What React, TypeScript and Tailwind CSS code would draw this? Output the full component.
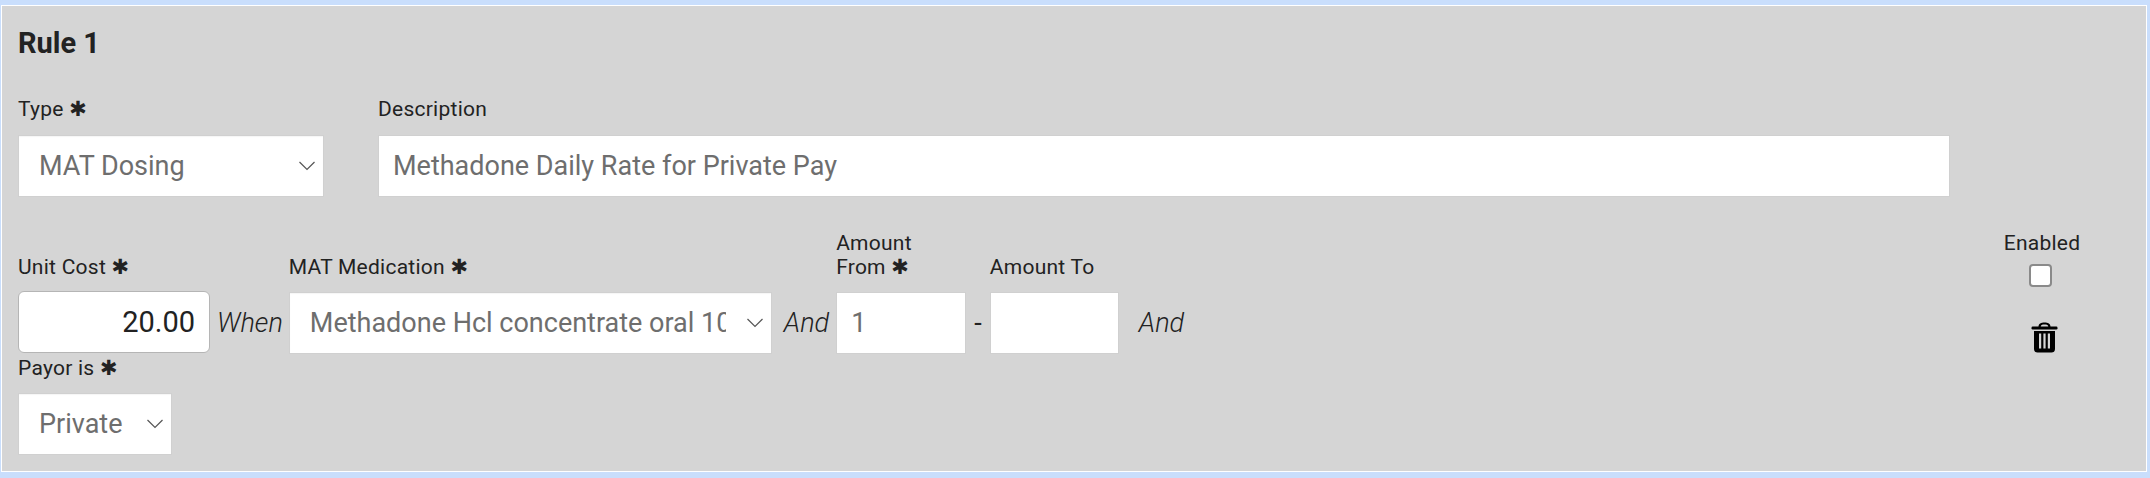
const font = "font-['Roboto',sans-serif]";

function Chevron() {
  return (
    <svg className="pointer-events-none absolute right-[7px] top-[24px] h-[12px] w-[18px]" viewBox="0 0 18 12" fill="none">
      <path d="M1.5 2 L9 9.5 L16.5 2" stroke="#555" strokeWidth="1.2" />
    </svg>
  );
}

function Trash() {
  return (
    <svg className="mt-[35px] mb-[1px] ml-[5px] h-[31px] w-[27px]" viewBox="0 0 27 31" fill="black">
      <path d="M7.5 5 C7.5 1.5 10 0.5 13.5 0.5 C17 0.5 19.5 1.5 19.5 5 L17.3 5 C17.3 3 16 2.5 13.5 2.5 C11 2.5 9.7 3 9.7 5 Z" />
      <rect x="0.5" y="4.5" width="26" height="3" rx="1.2" />
      <path fillRule="evenodd" d="M3 9 H24 V27 C24 29.5 22.5 30.5 20.5 30.5 H6.5 C4.5 30.5 3 29.5 3 27 Z M8 11.5 V26.5 H10.2 V11.5 Z M12.4 11.5 V26.5 H14.6 V11.5 Z M16.8 11.5 V26.5 H19 V11.5 Z" />
    </svg>
  );
}

function Star() {
  return <span className="text-[21px] font-['DejaVu_Sans',sans-serif]">✱</span>;
}

function Select({ value, className, pad }: { value: string; className: string; pad: string }) {
  return (
    <div className={`relative h-[62px] bg-white border border-[#d0d0d0] shadow-[inset_0_1px_1px_rgba(0,0,0,0.04)] ${className}`}>
      <select
        defaultValue={value}
        className={`h-full w-full appearance-none bg-transparent text-[27px] leading-[34px] tracking-normal text-[#6e6e6e] outline-none ${pad}`}
      >
        <option>{value}</option>
      </select>
      <Chevron />
    </div>
  );
}

function TextBox({ value, className }: { value: string; className: string }) {
  return (
    <input
      readOnly
      value={value}
      className={`h-[62px] bg-white border border-[#d0d0d0] px-[14px] text-[27px] tracking-normal text-[#6e6e6e] outline-none ${className}`}
    />
  );
}

function Word({ children, className }: { children: string; className: string }) {
  return <span className={`text-[27px] italic font-light leading-[62px] tracking-normal text-[#222] ${className}`}>{children}</span>;
}

export default function App() {
  return (
    <div className={`${font} h-[478px] bg-[#c9defc] pt-[5px] pb-[6px] pl-[1px] pr-[3px]`}>
      <div className="flex h-[467px] flex-col border border-white bg-[#d5d5d5] pl-[16px] text-[21px] leading-[24px] tracking-[0.25px] text-[#222]">
        <h2 className="mt-[20px] text-[29px] font-bold leading-[34px] tracking-normal">Rule 1</h2>

        <div className="mt-[37px] flex gap-[54px]">
          <div className="flex flex-col gap-[14px]">
            <label className="h-[24px]">Type <Star /></label>
            <Select value="MAT Dosing" className="w-[306px]" pad="pl-[20px] pr-[36px]" />
          </div>
          <div className="flex flex-col gap-[14px]">
            <label className="h-[24px]">Description</label>
            <TextBox value="Methadone Daily Rate for Private Pay" className="w-[1572px]" />
          </div>
        </div>

        <div className="mt-[34px] flex items-end">
          <div className="mb-[1px] flex flex-col gap-[12px]">
            <label>Unit Cost <Star /></label>
            <input
              readOnly
              value="20.00"
              className="h-[62px] w-[192px] rounded-[6px] border border-[#b5b5b5] bg-white px-[14px] text-right text-[29px] tracking-normal text-[#222] outline-none"
            />
          </div>
          <Word className="ml-[7px] mr-[6px]">When</Word>
          <div className="flex flex-col gap-[13px]">
            <label>MAT Medication <Star /></label>
            <Select value="Methadone Hcl concentrate oral 10mg/ml" className="w-[483px]" pad="pl-[20px] pr-[45px]" />
          </div>
          <Word className="ml-[12px] mr-[7px]">And</Word>
          <div className="flex flex-col gap-[13px]">
            <label className="w-[100px]">Amount From <Star /></label>
            <TextBox value="1" className="w-[130px]" />
          </div>
          <span className="mx-[8px] text-[27px] leading-[62px] text-[#222]">-</span>
          <div className="flex flex-col gap-[13px]">
            <label>Amount To</label>
            <TextBox value="" className="w-[129px]" />
          </div>
          <Word className="ml-[20px]">And</Word>

          <div className="ml-auto mr-[66px] flex w-[76px] flex-col items-center">
            <label>Enabled</label>
            <input
              type="checkbox"
              className="mt-[9px] mr-[4px] h-[23px] w-[23px] appearance-none rounded-[4px] border-[2px] border-[#8a8a8a] bg-white"
            />
            <Trash />
          </div>
        </div>

        <div className="mt-[2px] flex flex-col gap-[13px]">
          <label>Payor is <Star /></label>
          <Select value="Private" className="w-[154px]" pad="pl-[20px] pr-[30px]" />
        </div>
      </div>
    </div>
  );
}
